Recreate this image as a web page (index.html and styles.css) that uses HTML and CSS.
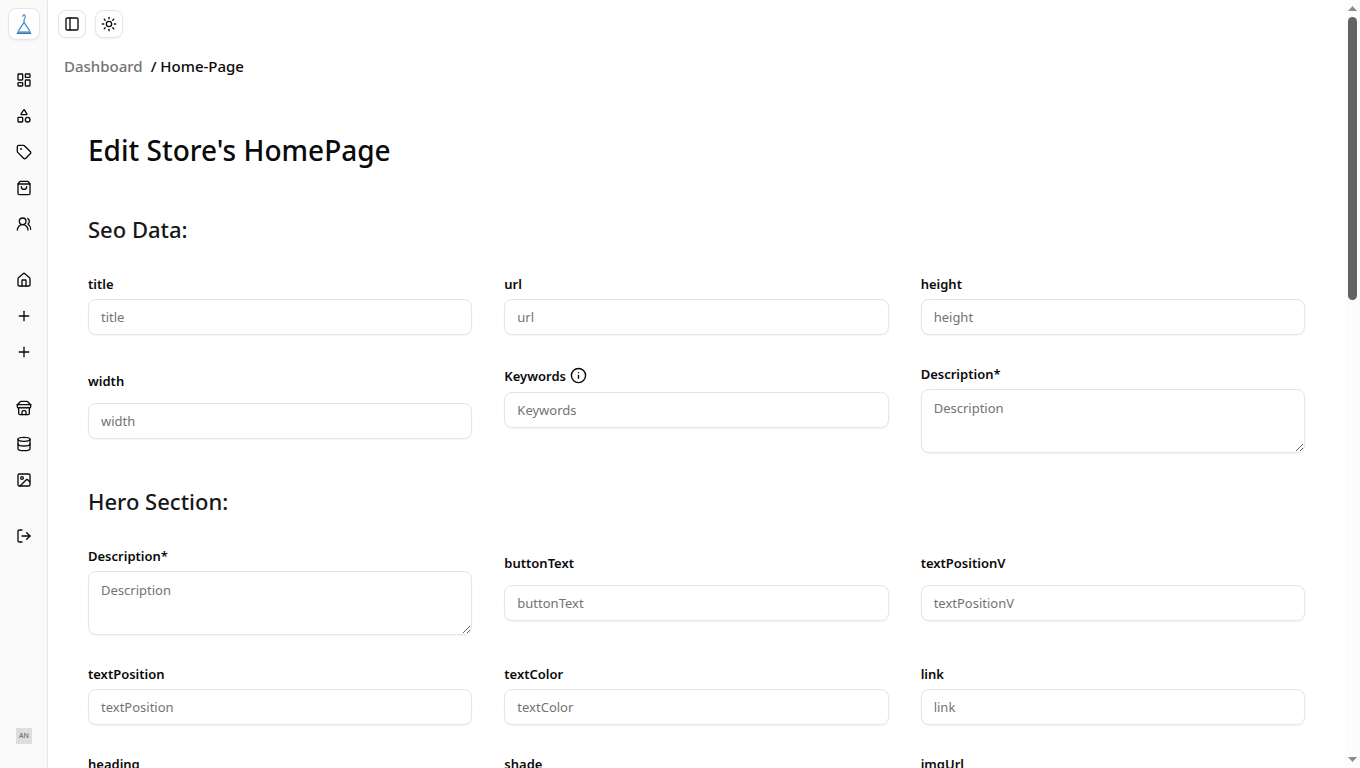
FILE: index.html
```
<!DOCTYPE html>
<html lang="en">
<head>
    <title>Home-Page</title>
    <meta charset="UTF-8">
    <meta name="viewport" content="width=device-width, initial-scale=1">
    <link rel="stylesheet" href="styles.css">
</head>
<body>
    <aside class="sidebar">
        <a class="logo" href="#" aria-label="Store">
            <svg width="24" height="24" viewBox="0 0 24 24" fill="none" stroke-linecap="round" stroke-linejoin="round">
                <path d="M10.8 4.2C10.8 2.4 13.2 2.2 13.3 4.4C13.4 6.2 12 6.4 12 8.6L12 10.6" stroke="#4a8fd0" stroke-width="1.2"/>
                <path d="M12 10.4L6.2 19.4M12 10.4L18 19.4" stroke="#4a8fd0" stroke-width="1.3"/>
                <path d="M5.8 19.6H18.2" stroke="#7fb2e4" stroke-width="1"/>
                <path d="M5.6 21.2H18.4" stroke="#2f74bd" stroke-width="1.7"/>
            </svg>
        </a>

        <nav class="menu">
            <div class="group">
                <a href="#" aria-label="Dashboard"><svg class="icon" viewBox="0 0 24 24"><rect width="7" height="9" x="3" y="3" rx="1"/><rect width="7" height="5" x="14" y="3" rx="1"/><rect width="7" height="9" x="14" y="12" rx="1"/><rect width="7" height="5" x="3" y="16" rx="1"/></svg></a>
                <a href="#" aria-label="Categories"><svg class="icon" viewBox="0 0 24 24"><path d="M8.3 10a.7.7 0 0 1-.626-1.079L11.4 3a.7.7 0 0 1 1.198-.043L16.3 8.9a.7.7 0 0 1-.572 1.1Z"/><rect x="3" y="14" width="7" height="7" rx="1"/><circle cx="17.5" cy="17.5" r="3.5"/></svg></a>
                <a href="#" aria-label="Products"><svg class="icon" viewBox="0 0 24 24"><path d="M12.586 2.586A2 2 0 0 0 11.172 2H4a2 2 0 0 0-2 2v7.172a2 2 0 0 0 .586 1.414l8.704 8.704a2.426 2.426 0 0 0 3.42 0l6.58-6.58a2.426 2.426 0 0 0 0-3.42z"/><circle cx="7.5" cy="7.5" r=".5" fill="currentColor"/></svg></a>
                <a href="#" aria-label="Orders"><svg class="icon" viewBox="0 0 24 24"><path d="M6 2 3 6v14a2 2 0 0 0 2 2h14a2 2 0 0 0 2-2V6l-3-4Z"/><path d="M3 6h18"/><path d="M16 10a4 4 0 0 1-8 0"/></svg></a>
                <a href="#" aria-label="Users"><svg class="icon" viewBox="0 0 24 24"><path d="M18 21a8 8 0 0 0-16 0"/><circle cx="10" cy="8" r="5"/><path d="M22 20c0-3.37-2-6.5-4-8a5 5 0 0 0-.45-8.3"/></svg></a>
            </div>
            <div class="group">
                <a href="#" aria-label="Home page"><svg class="icon" viewBox="0 0 24 24"><path d="M15 21v-8a1 1 0 0 0-1-1h-4a1 1 0 0 0-1 1v8"/><path d="M3 10a2 2 0 0 1 .709-1.528l7-5.999a2 2 0 0 1 2.582 0l7 5.999A2 2 0 0 1 21 10v9a2 2 0 0 1-2 2H5a2 2 0 0 1-2-2z"/></svg></a>
                <a href="#" aria-label="Add product"><svg class="icon" viewBox="0 0 24 24"><path d="M5 12h14"/><path d="M12 5v14"/></svg></a>
                <a href="#" aria-label="Add category"><svg class="icon" viewBox="0 0 24 24"><path d="M5 12h14"/><path d="M12 5v14"/></svg></a>
            </div>
            <div class="group">
                <a href="#" aria-label="Store"><svg class="icon" viewBox="0 0 24 24"><path d="m2 7 4.41-4.41A2 2 0 0 1 7.83 2h8.34a2 2 0 0 1 1.42.59L22 7"/><path d="M4 12v8a2 2 0 0 0 2 2h12a2 2 0 0 0 2-2v-8"/><path d="M15 22v-4a2 2 0 0 0-2-2h-2a2 2 0 0 0-2 2v4"/><path d="M2 7h20"/><path d="M22 7v3a2 2 0 0 1-2 2a2.7 2.7 0 0 1-1.59-.63.7.7 0 0 0-.82 0A2.7 2.7 0 0 1 16 12a2.7 2.7 0 0 1-1.59-.63.7.7 0 0 0-.82 0A2.7 2.7 0 0 1 12 12a2.7 2.7 0 0 1-1.59-.63.7.7 0 0 0-.82 0A2.7 2.7 0 0 1 8 12a2.7 2.7 0 0 1-1.59-.63.7.7 0 0 0-.82 0A2.7 2.7 0 0 1 4 12a2 2 0 0 1-2-2V7"/></svg></a>
                <a href="#" aria-label="Database"><svg class="icon" viewBox="0 0 24 24"><ellipse cx="12" cy="5" rx="9" ry="3"/><path d="M3 5v14a9 3 0 0 0 18 0V5"/><path d="M3 12a9 3 0 0 0 18 0"/></svg></a>
                <a href="#" aria-label="Images"><svg class="icon" viewBox="0 0 24 24"><rect width="18" height="18" x="3" y="3" rx="2"/><circle cx="9" cy="9" r="2"/><path d="m21 15-3.086-3.086a2 2 0 0 0-2.828 0L6 21"/></svg></a>
            </div>
            <div class="group">
                <a href="#" aria-label="Log out"><svg class="icon" viewBox="0 0 24 24"><path d="M9 21H5a2 2 0 0 1-2-2V5a2 2 0 0 1 2-2h4"/><path d="m16 17 5-5-5-5"/><path d="M21 12H9"/></svg></a>
            </div>
        </nav>

        <button class="avatar" type="button">AN</button>
    </aside>

    <main class="page">
        <header class="toolbar">
            <button type="button" aria-label="Toggle sidebar"><svg class="icon" viewBox="0 0 24 24"><rect width="18" height="18" x="3" y="3" rx="2"/><path d="M9 3v18"/></svg></button>
            <button type="button" aria-label="Toggle theme"><svg class="icon" viewBox="0 0 24 24"><circle cx="12" cy="12" r="4"/><path d="M12 2v2"/><path d="M12 20v2"/><path d="m4.93 4.93 1.41 1.41"/><path d="m17.66 17.66 1.41 1.41"/><path d="M2 12h2"/><path d="M20 12h2"/><path d="m6.34 17.66-1.41 1.41"/><path d="m19.07 4.93-1.41 1.41"/></svg></button>
        </header>

        <nav class="breadcrumb">
            <a href="#">Dashboard</a>
            <span>/ Home-Page</span>
        </nav>

        <form class="editor">
            <h1>Edit Store's HomePage</h1>

            <h2>Seo Data:</h2>
            <div class="fields">
                <div class="field">
                    <label for="seo-title">title</label>
                    <input id="seo-title" type="text" placeholder="title">
                </div>
                <div class="field">
                    <label for="seo-url">url</label>
                    <input id="seo-url" type="text" placeholder="url">
                </div>
                <div class="field">
                    <label for="seo-height">height</label>
                    <input id="seo-height" type="text" placeholder="height">
                </div>
                <div class="field">
                    <label for="seo-width">width</label>
                    <input id="seo-width" type="text" placeholder="width">
                </div>
                <div class="field top">
                    <label for="seo-keywords">Keywords
                        <svg class="icon info" viewBox="0 0 24 24"><circle cx="12" cy="12" r="10"/><path d="M12 16v-4"/><path d="M12 8h.01"/></svg>
                    </label>
                    <input id="seo-keywords" type="text" placeholder="Keywords">
                </div>
                <div class="field">
                    <label for="seo-description">Description*</label>
                    <textarea id="seo-description" placeholder="Description"></textarea>
                </div>
            </div>

            <h2>Hero Section:</h2>
            <div class="fields">
                <div class="field">
                    <label for="hero-description">Description*</label>
                    <textarea id="hero-description" placeholder="Description"></textarea>
                </div>
                <div class="field">
                    <label for="hero-button">buttonText</label>
                    <input id="hero-button" type="text" placeholder="buttonText">
                </div>
                <div class="field">
                    <label for="hero-position-v">textPositionV</label>
                    <input id="hero-position-v" type="text" placeholder="textPositionV">
                </div>
                <div class="field">
                    <label for="hero-position">textPosition</label>
                    <input id="hero-position" type="text" placeholder="textPosition">
                </div>
                <div class="field">
                    <label for="hero-color">textColor</label>
                    <input id="hero-color" type="text" placeholder="textColor">
                </div>
                <div class="field">
                    <label for="hero-link">link</label>
                    <input id="hero-link" type="text" placeholder="link">
                </div>
                <div class="field">
                    <label for="hero-heading">heading</label>
                    <input id="hero-heading" type="text" placeholder="heading">
                </div>
                <div class="field">
                    <label for="hero-shade">shade</label>
                    <input id="hero-shade" type="text" placeholder="shade">
                </div>
                <div class="field">
                    <label for="hero-img">imgUrl</label>
                    <input id="hero-img" type="text" placeholder="imgUrl">
                </div>
            </div>
        </form>
    </main>

    <div class="scrollbar" aria-hidden="true">
        <svg width="9" height="5" viewBox="0 0 9 5"><path d="M0 5L4.500 0L9 5Z" fill="#8b8b8b"/></svg>
        <div class="track"><div class="thumb"></div></div>
        <svg width="9" height="5" viewBox="0 0 9 5"><path d="M0 0L4.500 5L9 0Z" fill="#8b8b8b"/></svg>
    </div>
</body>
</html>
```

FILE: styles.css
```
*{
    box-sizing: border-box;
}

body{
    margin: 0;
    display: flex;
    height: 100vh;
    overflow: hidden;
    background-color: white;
    color: #0a0a0a;
    font-family: "Segoe UI", "Noto Sans", "Open Sans", sans-serif;
    font-size: 14px;
}

a{
    color: inherit;
    text-decoration: none;
}

button, input, textarea{
    font: inherit;
    color: inherit;
}

.icon{
    display: block;
    width: 16px;
    height: 16px;
    fill: none;
    stroke: currentColor;
    stroke-width: 2;
    stroke-linecap: round;
    stroke-linejoin: round;
}

/* sidebar */
.sidebar{
    flex: none;
    width: 48px;
    display: flex;
    flex-direction: column;
    padding: 8px 7px 24px 8px;
    background-color: #fafafa;
    border-right: 1px solid #e5e5e5;
}

.logo{
    display: flex;
    align-items: center;
    justify-content: center;
    width: 32px;
    height: 32px;
    background-color: white;
    border: 1px solid #e5e5e5;
    border-radius: 8px;
    box-shadow: 0 1px 2px rgba(0, 0, 0, 0.05);
}

.menu{
    flex: 1;
    display: flex;
    flex-direction: column;
    gap: 24px;
    margin-top: 24px;
}

.group{
    display: flex;
    flex-direction: column;
    gap: 4px;
}

.group a{
    width: 32px;
    padding: 8px;
}

.avatar{
    width: 16px;
    height: 16px;
    margin-left: 8px;
    padding: 0;
    border: 0;
    background-color: #dedede;
    color: #555;
    font-size: 7px;
    line-height: 16px;
    text-align: center;
}

/* page */
.page{
    flex: 1;
    min-width: 0;
    overflow: hidden;
}

.toolbar{
    display: flex;
    gap: 9px;
    padding: 10px;
}

.toolbar button{
    width: 28px;
    height: 28px;
    padding: 5px;
    background-color: white;
    border: 1px solid #e5e5e5;
    border-radius: 8px;
    box-shadow: 0 1px 2px rgba(0, 0, 0, 0.05);
}

.breadcrumb{
    display: flex;
    gap: 8px;
    padding: 6px 16px;
    font-size: 15px;
    font-weight: 500;
    line-height: 24px;
}

.breadcrumb a{
    color: #737373;
}

.editor{
    padding: 48px 40px;
}

h1, h2{
    margin: 0;
    font-weight: 500;
}

h1{
    font-size: 28px;
    line-height: 36px;
    margin-bottom: 45px;
}

h2{
    font-size: 22px;
    line-height: 32px;
    margin-bottom: 32px;
    color: #171717;
}

.fields{
    display: grid;
    grid-template-columns: repeat(3, minmax(0, 1fr));
    gap: 32px;
    margin-bottom: 32px;
}

.field{
    display: grid;
    gap: 8px;
}

.top{
    align-content: start;
}

label{
    display: flex;
    align-items: center;
    gap: 4px;
    font-size: 13px;
    font-weight: 600;
    line-height: 14px;
}

.info{
    width: 17px;
    height: 17px;
}

input, textarea{
    width: 100%;
    height: 36px;
    padding: 4px 12px;
    background-color: white;
    border: 1px solid #e5e5e5;
    border-radius: 8px;
    box-shadow: 0 1px 2px rgba(0, 0, 0, 0.05);
    font-size: 13px;
}

textarea{
    display: block;
    height: 64px;
    padding: 8px 12px;
    line-height: 20px;
    resize: vertical;
}

input::placeholder, textarea::placeholder{
    color: #737373;
}

/* scrollbar */
.scrollbar{
    flex: none;
    width: 15px;
    display: flex;
    flex-direction: column;
    align-items: center;
    gap: 6px;
    padding: 6px 0;
    background-color: #fcfcfc;
}

.scrollbar svg{
    flex: none;
}

.track{
    flex: 1;
    width: 9px;
}

.thumb{
    height: 38.500%;
    background-color: #636363;
    border-radius: 5px;
}
```
